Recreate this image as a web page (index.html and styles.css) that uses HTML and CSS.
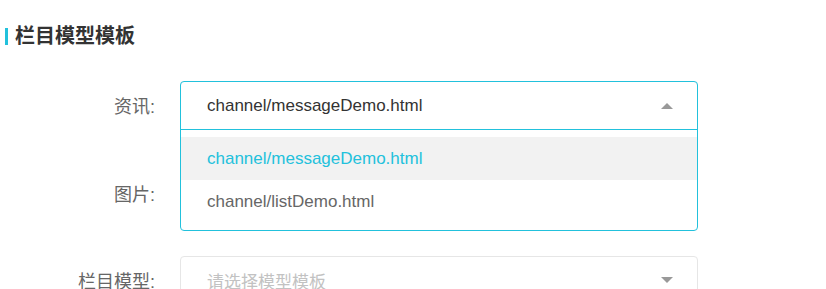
FILE: index.html
```html
<!DOCTYPE html>
<html lang="zh-CN">
<head>
    <meta charset="UTF-8">
    <meta name="viewport" content="width=device-width, initial-scale=1.0">
    <title>栏目模型模板</title>
    <link rel="stylesheet" href="styles.css">
</head>
<body>
    <section class="panel">
        <h2 class="panel-title">栏目模型模板</h2>
        <form class="tpl-form">
            <div class="form-row">
                <label class="form-label">资讯:</label>
                <div class="select-wrap">
                    <div class="select"><span class="select-value">channel/messageDemo.html</span><i class="caret"></i></div>
                    <div class="dropdown">
                        <div class="dropdown-head">
                            <span class="select-value">channel/messageDemo.html</span>
                            <i class="caret up"></i>
                        </div>
                        <ul class="dropdown-list">
                            <li class="option selected">channel/messageDemo.html</li>
                            <li class="option">channel/listDemo.html</li>
                        </ul>
                    </div>
                </div>
            </div>
            <div class="form-row">
                <label class="form-label">图片:</label>
                <div class="select-wrap">
                    <div class="select"><span class="select-value">channel/listDemo.html</span><i class="caret"></i></div>
                </div>
            </div>
            <div class="form-row">
                <label class="form-label">栏目模型:</label>
                <div class="select-wrap">
                    <div class="select"><span class="placeholder">请选择模型模板</span><i class="caret"></i></div>
                </div>
            </div>
        </form>
    </section>
</body>
</html>
```

FILE: styles.css
```css
body { margin: 0; background-color: #fff; font-family: "Liberation Sans", "Noto Sans CJK SC", sans-serif; color: #333; overflow: hidden; }
.panel { padding: 24px 0 0 5px; }
.panel-title { display: flex; align-items: center; margin: 0; font-size: 20px; line-height: 24px; font-weight: bold; color: #333; }
.panel-title::before { content: ""; width: 3px; height: 17px; background-color: #22c1dc; margin-right: 7px; }
.tpl-form { margin-top: 33px; margin-left: -5px; }
.form-row { display: flex; align-items: center; height: 48px; margin-bottom: 40px; }
.form-row:nth-child(2) { margin-bottom: 39px; }
.form-label { width: 155px; margin-right: 25px; text-align: right; font-size: 18px; color: #666; }
.select-wrap { position: relative; width: 518px; height: 48px; }
.select { display: flex; align-items: center; justify-content: space-between; box-sizing: border-box; height: 48px; padding: 0 24px 0 26px; border: 1px solid #e6e6e6; border-radius: 4px; background-color: #fff; font-size: 17px; }
.select-value { color: #333; }
.placeholder { color: #c2c2c2; }
.caret { width: 0; height: 0; border-left: 6px solid transparent; border-right: 6px solid transparent; border-top: 6px solid #999; }
.caret.up { border-top: none; border-bottom: 6px solid #999; }
.dropdown { position: absolute; top: 0; left: 0; right: 0; z-index: 10; border: 1px solid #22c1dc; border-radius: 4px; background-color: #fff; font-size: 17px; }
.dropdown-head { display: flex; align-items: center; justify-content: space-between; height: 47px; padding: 0 24px 0 26px; border-bottom: 1px solid #22c1dc; }
.dropdown-list { list-style: none; margin: 0; padding: 7px 0; }
.option { height: 43px; line-height: 43px; padding-left: 26px; color: #666; }
.option.selected { background-color: #f2f2f2; color: #22c1dc; }
```
